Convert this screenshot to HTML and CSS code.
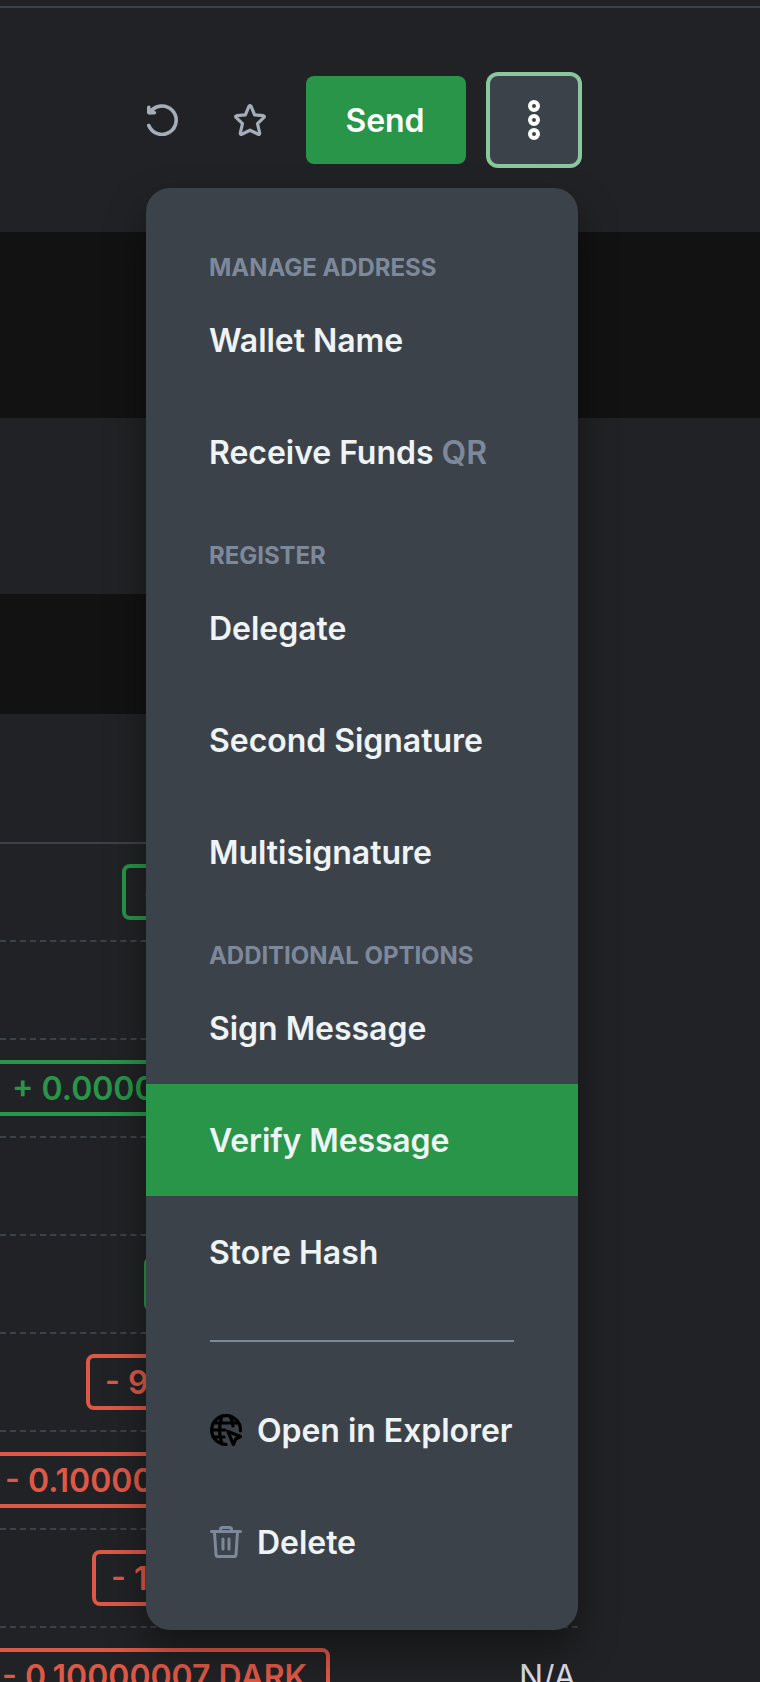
FILE: index.html
```html
<!DOCTYPE html>
<html lang="en">
<head>
<meta charset="utf-8">
<title>Wallet details</title>
<link rel="stylesheet" href="styles.css">
</head>
<body>
<div class="page">
  <header class="toolbar">
    <button class="icon-btn" aria-label="Refresh">
      <svg width="32" height="32" viewBox="0 0 32 32" fill="none" stroke="currentColor" stroke-width="3.6" stroke-linecap="round" stroke-linejoin="round"><path d="M2.8 21.5A14.2 14.2 0 1 0 4 8.6"/><path d="M2.8 3.2V8.8H8.4L3.4 8.2L6.5 5.5"/></svg>
    </button>
    <button class="icon-btn" aria-label="Star">
      <svg width="32" height="32" viewBox="0 0 32 32" fill="none" stroke="currentColor" stroke-width="3.2" stroke-linejoin="round"><path d="M15 2.2Q16 1 17 2.2L20.6 10.8L29.4 11.7Q31 12.2 30 13.4L23.5 19.6L25.7 29Q25.7 30.7 24.2 30.2L16 26.2L7.8 30.2Q6.3 30.7 6.3 29L8.5 19.6L2 13.4Q1 12.2 2.6 11.7L11.4 10.8Z"/></svg>
    </button>
    <button class="send">Send</button>
    <button class="more" aria-label="More">
      <svg width="12" height="40" viewBox="0 0 12 40" fill="none" stroke="currentColor" stroke-width="4"><circle cx="6" cy="6" r="4"/><circle cx="6" cy="20" r="4"/><circle cx="6" cy="34" r="4"/></svg>
    </button>
  </header>
  <section class="band band-lg"></section>
  <section class="gap"></section>
  <section class="band band-sm"></section>
  <section class="table">
    <div class="table-head"></div>
    <div class="row"><span class="badge in first" style="width:208px">+</span></div>
    <div class="row"></div>
    <div class="row"><span class="badge in" style="width:337px">+ 0.00001 DARK</span></div>
    <div class="row"></div>
    <div class="row"><span class="badge in" style="width:186px"></span></div>
    <div class="row"><span class="badge out" style="width:244px">- 9.1 DARK</span></div>
    <div class="row"><span class="badge out" style="width:344px">- 0.10000 DARK</span></div>
    <div class="row"><span class="badge out" style="width:238px">- 1.1 DARK</span></div>
    <div class="row"><span class="badge out" style="width:347px">- 0.10000007 DARK</span><span class="na">N/A</span></div>
  </section>
  <nav class="menu">
    <div class="title">MANAGE ADDRESS</div>
    <a class="item">Wallet Name</a>
    <a class="item">Receive Funds&nbsp;<span class="muted">QR</span></a>
    <div class="title">REGISTER</div>
    <a class="item">Delegate</a>
    <a class="item">Second Signature</a>
    <a class="item">Multisignature</a>
    <div class="title">ADDITIONAL OPTIONS</div>
    <a class="item">Sign Message</a>
    <a class="item active">Verify Message</a>
    <a class="item">Store Hash</a>
    <hr class="divider">
    <a class="item">
      <svg class="globe" width="32" height="32" viewBox="0 0 32 32" fill="none" stroke="currentColor" stroke-width="3.2" stroke-linecap="round" stroke-linejoin="round"><path d="M30.4 17A14.4 14.4 0 1 0 16 30.4M3 9H29M2 16H15M3 23H14M12 2Q7 16 12 30M20 2Q22.5 7 23 12"/><path d="M18 17.5L30.5 22.5L25.8 25L23.3 30.5Z"/></svg>
      Open in Explorer</a>
    <a class="item">
      <svg class="trash" width="32" height="32" viewBox="0 0 32 32" fill="none" stroke="currentColor" stroke-width="3" stroke-linecap="round" stroke-linejoin="round"><path d="M1.5 5.5H30.5M10.5 5V3.5Q10.5 1.5 12.5 1.5H19.5Q21.5 1.5 21.5 3.5V5M4.5 6L6 28.5Q6.2 30.5 8 30.5H24Q25.8 30.5 26 28.5L27.5 6M13 13V23M19 13V23"/></svg>
      Delete</a>
  </nav>
</div>
</body>
</html>
```
FILE: styles.css
```css
* { box-sizing: border-box; }
body { margin: 0; background: #212225; font-family: Inter, sans-serif; }
.page { position: relative; width: 760px; height: 1682px; overflow: hidden; padding-top: 6px; }
button { border: 0; padding: 0; margin: 0; font: inherit; }
.toolbar { display: flex; align-items: flex-start; height: 226px; padding: 68px 182px 0 146px; border-top: 2px solid #3c4249; }
.toolbar > * { flex: none; }
.icon-btn { display: flex; align-items: center; justify-content: center; width: 32px; height: 88px; margin-right: 56px; background: none; color: #a5adb9; }
.icon-btn + .icon-btn { margin-right: 40px; }
.icon-btn svg { display: block; }
.send { width: 160px; height: 88px; padding-right: 2px; border-radius: 8px; background: #289548; color: #fff; font-size: 32px; font-weight: 600; letter-spacing: -.1px; }
.more { display: flex; align-items: center; justify-content: center; width: 88px; height: 88px; margin-left: 24px; border-radius: 8px; background: #3c4249; color: #fff; box-shadow: 0 0 0 4px #8bc79c; }
.band { background: #121213; }
.band-lg { height: 186px; }
.gap { height: 176px; }
.band-sm { width: 560px; height: 120px; }
.table { width: 578px; }
.table-head { height: 130px; border-bottom: 2px solid #3c4249; }
.row { display: flex; align-items: center; justify-content: flex-end; height: 98px; padding-right: 248px; border-bottom: 2px dashed #3c4249; }
.badge { flex: none; height: 56px; padding-left: 15px; border: 4px solid; border-radius: 8px; font-size: 32px; font-weight: 600; line-height: 50px; white-space: nowrap; }
.first { padding-left: 17px; }
.in { color: #289548; }
.out { color: #de5846; }
.row:last-child { padding-right: 0; border-bottom-color: transparent; }
.row:last-child .badge { margin-right: 190px; }
.na { flex: none; width: 58px; color: #dbdee5; font-size: 32px; text-indent: -1px; }
.menu { position: absolute; left: 146px; top: 188px; width: 432px; padding: 32px 0; border-radius: 24px; background: #3c4249; box-shadow: 0 20px 40px rgba(0, 0, 0, .4); }
.title { height: 64px; padding: 32px 63px 0; color: #7d899b; font-size: 24px; font-weight: 700; line-height: 32px; letter-spacing: -.05px; white-space: nowrap; }
.item { display: flex; align-items: center; height: 112px; padding: 0 63px; color: #eef3f5; font-size: 32px; font-weight: 600; letter-spacing: -.04px; white-space: nowrap; }
.item svg { flex: none; margin-right: 15px; margin-left: 1px; }
.active { background: #289548; letter-spacing: -.12px; }
.muted, .trash { color: #7d899b; }
.globe { color: #000; }
.divider { height: 2px; margin: 32px 64px; border: 0; background: #7d899b; }
```
